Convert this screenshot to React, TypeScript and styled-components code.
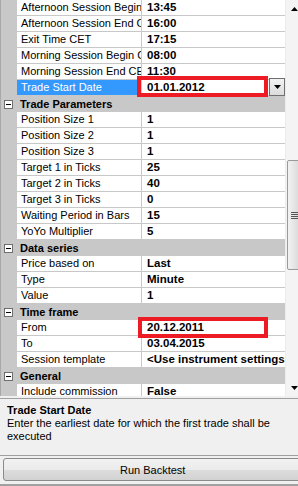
import React from 'react';
import styled, { createGlobalStyle } from 'styled-components';

const GlobalStyle = createGlobalStyle`
  *, *::before, *::after { box-sizing: border-box; }
  html, body { margin: 0; padding: 0; overflow: hidden; background: #f0f0f0; }
  body { font-family: "Liberation Sans", Arial, sans-serif; }
`;

const Window = styled.div`
  width: 302px;
  height: 486px;
  display: flex;
  flex-direction: column;
  background: #f0f0f0;
  overflow: hidden;
`;

const GridArea = styled.div`
  position: relative;
  flex: 0 0 396px;
  display: flex;
  overflow: hidden;
`;

const GridList = styled.div`
  flex: 0 0 285px;
  display: flex;
  flex-direction: column;
  background: #fff;
  overflow: hidden;
`;

const Row = styled.div`
  position: relative;
  flex: 0 0 16px;
  display: flex;
  font-size: 11px;
  line-height: 15px;
  color: #000;
`;

const Margin = styled.div`
  flex: 0 0 17px;
  background: #c8c8c8;
  border-left: 1px solid #a8a8a8;
`;

const Label = styled.div<{ $selected?: boolean }>`
  flex: 0 0 125px;
  padding-left: 4px;
  white-space: nowrap;
  overflow: hidden;
  border-bottom: 1px solid #c8c8c8;
  border-right: 1px solid #c8c8c8;
  background: ${p => (p.$selected ? '#3399ff' : '#fff')};
  color: ${p => (p.$selected ? '#fff' : '#000')};
`;

const Value = styled.div`
  flex: 1 1 auto;
  padding-left: 5px;
  white-space: nowrap;
  overflow: hidden;
  font-weight: bold;
  font-size: 11.5px;
  border-bottom: 1px solid #c8c8c8;
`;

const CategoryRow = styled.div`
  flex: 0 0 16px;
  display: flex;
  align-items: center;
  background: #c8c8c8;
  border-left: 1px solid #a8a8a8;
  font-size: 11px;
  font-weight: bold;
  line-height: 15px;
  color: #000;
`;

const Toggle = styled.span`
  position: relative;
  flex: 0 0 9px;
  height: 9px;
  margin: 0 7px 0 3px;
  border: 1px solid #6f6f6f;
  background: #fff;
  &::after {
    content: '';
    position: absolute;
    left: 1px;
    right: 1px;
    top: 3px;
    height: 1px;
    background: #000;
  }
`;

const DropButton = styled.div`
  position: absolute;
  right: 0;
  top: -2px;
  width: 16px;
  height: 18px;
  border: 1px solid #707070;
  background: linear-gradient(#f2f2f2, #dcdcdc);
  display: flex;
  align-items: center;
  justify-content: center;
`;

const Scrollbar = styled.div`
  flex: 0 0 17px;
  display: flex;
  flex-direction: column;
  background: #f4f4f4;
  border-left: 1px solid #ececec;
`;

const ArrowBox = styled.div`
  flex: 0 0 17px;
  display: flex;
  align-items: center;
  justify-content: center;
`;

const Thumb = styled.div`
  margin-top: 143px;
  margin-left: 1px;
  height: 110px;
  border: 1px solid #9a9a9a;
  border-radius: 2px;
  background: linear-gradient(90deg, #f2f2f2, #e4e4e4 50%, #d6d6d6);
  display: flex;
  align-items: center;
  justify-content: center;
`;

const Spacer = styled.div`
  flex: 1 1 auto;
`;

const RedBox = styled.div`
  position: absolute;
  border: 4px solid #ed1c24;
  pointer-events: none;
`;

const Splitter = styled.div`
  flex: 0 0 3px;
  border-bottom: 1px solid #a0a0a0;
`;

const Help = styled.div`
  flex: 0 0 57px;
  padding: 4px 7px 0;
  background: #f0f0f0;
  border-bottom: 1px solid #a0a0a0;
  color: #000;
`;

const HelpTitle = styled.div`
  font-size: 11px;
  font-weight: bold;
  line-height: 14px;
`;

const HelpText = styled.div`
  font-size: 11px;
  line-height: 13px;
`;

const ButtonBar = styled.div`
  flex: 1 1 auto;
  padding: 2px 0 0 3px;
  border-bottom: 2px solid #a0a0a0;
`;

const RunButton = styled.button`
  display: block;
  width: 310px;
  height: 23px;
  padding: 0;
  border: 1px solid #8a8a8a;
  border-radius: 3px;
  background: linear-gradient(#f2f2f2, #ebebeb 50%, #dddddd 50%, #d2d2d2);
  font-family: "Liberation Sans", Arial, sans-serif;
  font-size: 11px;
  color: #000;
  text-align: left;
  padding-left: 116px;
`;

type Item =
  | { kind: 'cat'; title: string }
  | { kind: 'prop'; label: string; value: string; selected?: boolean; dropdown?: boolean };

const items: Item[] = [
  { kind: 'prop', label: 'Afternoon Session Begin CET', value: '13:45' },
  { kind: 'prop', label: 'Afternoon Session End CET', value: '16:00' },
  { kind: 'prop', label: 'Exit Time CET', value: '17:15' },
  { kind: 'prop', label: 'Morning Session Begin CET', value: '08:00' },
  { kind: 'prop', label: 'Morning Session End CET', value: '11:30' },
  { kind: 'prop', label: 'Trade Start Date', value: '01.01.2012', selected: true, dropdown: true },
  { kind: 'cat', title: 'Trade Parameters' },
  { kind: 'prop', label: 'Position Size 1', value: '1' },
  { kind: 'prop', label: 'Position Size 2', value: '1' },
  { kind: 'prop', label: 'Position Size 3', value: '1' },
  { kind: 'prop', label: 'Target 1 in Ticks', value: '25' },
  { kind: 'prop', label: 'Target 2 in Ticks', value: '40' },
  { kind: 'prop', label: 'Target 3 in Ticks', value: '0' },
  { kind: 'prop', label: 'Waiting Period in Bars', value: '15' },
  { kind: 'prop', label: 'YoYo Multiplier', value: '5' },
  { kind: 'cat', title: 'Data series' },
  { kind: 'prop', label: 'Price based on', value: 'Last' },
  { kind: 'prop', label: 'Type', value: 'Minute' },
  { kind: 'prop', label: 'Value', value: '1' },
  { kind: 'cat', title: 'Time frame' },
  { kind: 'prop', label: 'From', value: '20.12.2011' },
  { kind: 'prop', label: 'To', value: '03.04.2015' },
  { kind: 'prop', label: 'Session template', value: '<Use instrument settings>' },
  { kind: 'cat', title: 'General' },
  { kind: 'prop', label: 'Include commission', value: 'False' },
];

const Tri = ({ up }: { up?: boolean }) => (
  <svg width="7" height="4" viewBox="0 0 7 4">
    <polygon points={up ? '0,4 7,4 3.5,0' : '0,0 7,0 3.5,4'} fill="#000" />
  </svg>
);

const Grip = () => (
  <svg width="7" height="7" viewBox="0 0 7 7">
    <rect x="0" y="0" width="7" height="1" fill="#555" />
    <rect x="0" y="2" width="7" height="1" fill="#555" />
    <rect x="0" y="4" width="7" height="1" fill="#555" />
    <rect x="0" y="6" width="7" height="1" fill="#555" />
  </svg>
);

export default function App() {
  return (
    <Window>
      <GlobalStyle />
      <GridArea>
        <GridList>
          {items.map((it, i) =>
            it.kind === 'cat' ? (
              <CategoryRow key={i}>
                <Toggle />
                {it.title}
              </CategoryRow>
            ) : (
              <Row key={i}>
                <Margin />
                <Label $selected={it.selected}>{it.label}</Label>
                <Value>{it.value}</Value>
                {it.dropdown && (
                  <DropButton>
                    <Tri />
                  </DropButton>
                )}
              </Row>
            )
          )}
        </GridList>
        <Scrollbar>
          <ArrowBox>
            <Tri up />
          </ArrowBox>
          <Thumb>
            <Grip />
          </Thumb>
          <Spacer />
          <ArrowBox>
            <Tri />
          </ArrowBox>
        </Scrollbar>
        <RedBox style={{ left: 137, top: 76, width: 131, height: 21 }} />
        <RedBox style={{ left: 138, top: 317, width: 130, height: 21 }} />
      </GridArea>
      <Splitter />
      <Help>
        <HelpTitle>Trade Start Date</HelpTitle>
        <HelpText>Enter the earliest date for which the first trade shall be executed</HelpText>
      </Help>
      <ButtonBar>
        <RunButton>Run Backtest</RunButton>
      </ButtonBar>
    </Window>
  );
}
